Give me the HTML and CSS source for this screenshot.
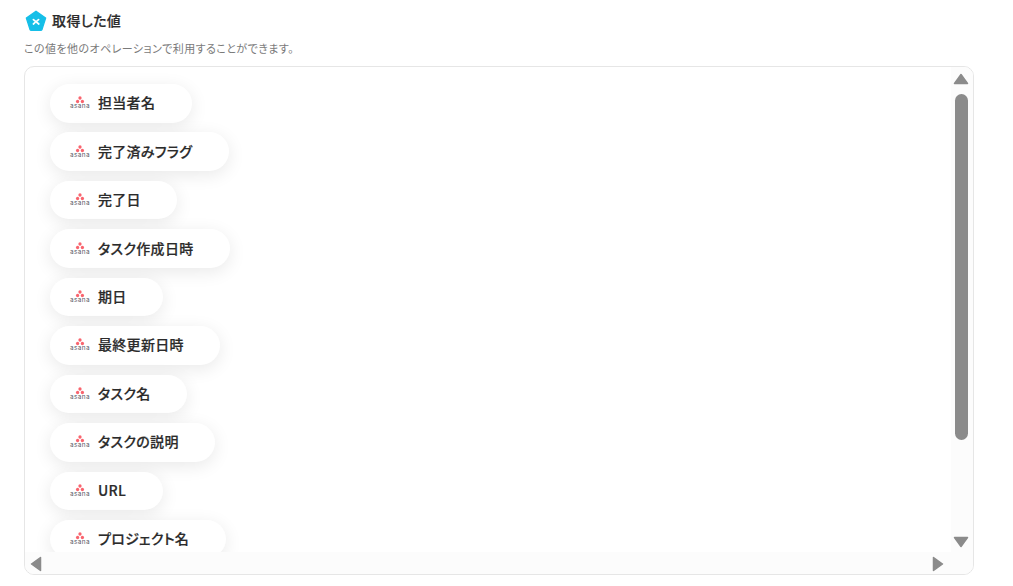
FILE: index.html
```html
<!DOCTYPE html>
<html lang="ja">
<head>
<meta charset="utf-8">
<title>取得した値</title>
<link rel="stylesheet" href="styles.css">
</head>
<body>
<main class="section">
  <h2 class="title">
    <svg class="title-icon" viewBox="0 0 22 22" width="22" height="22" aria-hidden="true">
      <path d="M11 1.2 20.6 8.1 17 19.4a1.5 1.5 0 0 1-1.4 1H6.4a1.5 1.5 0 0 1-1.4-1L1.4 8.1Z" fill="#16bfe8" stroke="#16bfe8" stroke-width="1.4" stroke-linejoin="round"/>
      <path d="M8.4 9.6 13.8 14M13.6 9.6 12 10.9M9.9 12.7 8.4 14" stroke="#fff" stroke-width="1.7" stroke-linecap="round" fill="none"/>
    </svg>
    <span class="title-text">取得した値</span>
  </h2>
  <p class="desc">この値を他のオペレーションで利用することができます。</p>
  <div class="box">
    <div class="viewport">
      <ul class="pills">
        <li class="pill"><svg class="logo" viewBox="0 0 20 13"><circle cx="10" cy="2" r="1.65" fill="#f9646e"/><circle cx="7.6" cy="5.5" r="1.65" fill="#f9646e"/><circle cx="12.4" cy="5.5" r="1.65" fill="#f9646e"/><text x="10" y="12.4" class="logo-text">asana</text></svg><span class="pill-label">担当者名</span></li>
        <li class="pill"><svg class="logo" viewBox="0 0 20 13"><circle cx="10" cy="2" r="1.65" fill="#f9646e"/><circle cx="7.6" cy="5.5" r="1.65" fill="#f9646e"/><circle cx="12.4" cy="5.5" r="1.65" fill="#f9646e"/><text x="10" y="12.4" class="logo-text">asana</text></svg><span class="pill-label">完了済みフラグ</span></li>
        <li class="pill"><svg class="logo" viewBox="0 0 20 13"><circle cx="10" cy="2" r="1.65" fill="#f9646e"/><circle cx="7.6" cy="5.5" r="1.65" fill="#f9646e"/><circle cx="12.4" cy="5.5" r="1.65" fill="#f9646e"/><text x="10" y="12.4" class="logo-text">asana</text></svg><span class="pill-label">完了日</span></li>
        <li class="pill"><svg class="logo" viewBox="0 0 20 13"><circle cx="10" cy="2" r="1.65" fill="#f9646e"/><circle cx="7.6" cy="5.5" r="1.65" fill="#f9646e"/><circle cx="12.4" cy="5.5" r="1.65" fill="#f9646e"/><text x="10" y="12.4" class="logo-text">asana</text></svg><span class="pill-label">タスク作成日時</span></li>
        <li class="pill"><svg class="logo" viewBox="0 0 20 13"><circle cx="10" cy="2" r="1.65" fill="#f9646e"/><circle cx="7.6" cy="5.5" r="1.65" fill="#f9646e"/><circle cx="12.4" cy="5.5" r="1.65" fill="#f9646e"/><text x="10" y="12.4" class="logo-text">asana</text></svg><span class="pill-label">期日</span></li>
        <li class="pill"><svg class="logo" viewBox="0 0 20 13"><circle cx="10" cy="2" r="1.65" fill="#f9646e"/><circle cx="7.6" cy="5.5" r="1.65" fill="#f9646e"/><circle cx="12.4" cy="5.5" r="1.65" fill="#f9646e"/><text x="10" y="12.4" class="logo-text">asana</text></svg><span class="pill-label">最終更新日時</span></li>
        <li class="pill"><svg class="logo" viewBox="0 0 20 13"><circle cx="10" cy="2" r="1.65" fill="#f9646e"/><circle cx="7.6" cy="5.5" r="1.65" fill="#f9646e"/><circle cx="12.4" cy="5.5" r="1.65" fill="#f9646e"/><text x="10" y="12.4" class="logo-text">asana</text></svg><span class="pill-label">タスク名</span></li>
        <li class="pill"><svg class="logo" viewBox="0 0 20 13"><circle cx="10" cy="2" r="1.65" fill="#f9646e"/><circle cx="7.6" cy="5.5" r="1.65" fill="#f9646e"/><circle cx="12.4" cy="5.5" r="1.65" fill="#f9646e"/><text x="10" y="12.4" class="logo-text">asana</text></svg><span class="pill-label">タスクの説明</span></li>
        <li class="pill"><svg class="logo" viewBox="0 0 20 13"><circle cx="10" cy="2" r="1.65" fill="#f9646e"/><circle cx="7.6" cy="5.5" r="1.65" fill="#f9646e"/><circle cx="12.4" cy="5.5" r="1.65" fill="#f9646e"/><text x="10" y="12.4" class="logo-text">asana</text></svg><span class="pill-label">URL</span></li>
        <li class="pill"><svg class="logo" viewBox="0 0 20 13"><circle cx="10" cy="2" r="1.65" fill="#f9646e"/><circle cx="7.6" cy="5.5" r="1.65" fill="#f9646e"/><circle cx="12.4" cy="5.5" r="1.65" fill="#f9646e"/><text x="10" y="12.4" class="logo-text">asana</text></svg><span class="pill-label">プロジェクト名</span></li>
      </ul>
    </div>
    <div class="vbar">
      <svg class="arrow" viewBox="0 0 16 12" width="16" height="12"><path d="M8 1.5 14.5 10.5H1.5Z" fill="#8b8b8b" stroke="#8b8b8b" stroke-width="1.5" stroke-linejoin="round"/></svg>
      <div class="thumb"></div>
      <svg class="arrow arrow-down" viewBox="0 0 16 12" width="16" height="12"><path d="M1.5 1.5H14.5L8 10.5Z" fill="#8b8b8b" stroke="#8b8b8b" stroke-width="1.5" stroke-linejoin="round"/></svg>
    </div>
    <div class="hbar">
      <svg viewBox="0 0 12 16" width="12" height="16"><path d="M10.5 1.5V14.5L1.5 8Z" fill="#8b8b8b" stroke="#8b8b8b" stroke-width="1.5" stroke-linejoin="round"/></svg>
      <svg viewBox="0 0 12 16" width="12" height="16"><path d="M1.5 1.5V14.5L10.5 8Z" fill="#8b8b8b" stroke="#8b8b8b" stroke-width="1.5" stroke-linejoin="round"/></svg>
    </div>
    <div class="corner"></div>
  </div>
</main>
</body>
</html>
```
FILE: styles.css
```css
* { box-sizing: border-box; }
html, body { margin: 0; height: 100%; overflow: hidden; background: #fff; }
body { font-family: "Noto Sans CJK JP", "Noto Sans", sans-serif; color: #2b2b2b; font-feature-settings: "palt"; }
.section { padding: 10px 39px 0 24px; }
.title { display: flex; align-items: center; gap: 5px; margin: 0 0 0 1px; height: 22px; font-size: 14px; line-height: 20px; font-weight: 500; letter-spacing: .4px; -webkit-text-stroke: .2px #2b2b2b; }
.title-text { padding-bottom: 2px; }
.title-icon { flex: none; }
.desc { margin: 9px 0 0; height: 16px; font-size: 11px; line-height: 15px; letter-spacing: .43px; color: #7a7a7a; }
.box { display: grid; grid-template-columns: 1fr 22px; grid-template-rows: 485px 23px; width: 950px; height: 509px; margin-top: 9px; border: 1px solid #e6e6e6; border-radius: 10px; overflow: hidden; background: #fff; }
.viewport { overflow: hidden; padding: 17px 0 0 25px; }
.pills { display: flex; flex-direction: column; align-items: flex-start; gap: 9.94px; margin: 0; padding: 0; list-style: none; }
.pill { display: flex; align-items: center; gap: 8px; height: 38.5px; padding: 0 36.5px 0 20px; border-radius: 20px; background: #fff; box-shadow: 0 4px 18px rgba(0, 0, 0, .09); font-size: 14px; font-weight: 500; line-height: 1; letter-spacing: .3px; white-space: nowrap; -webkit-text-stroke: .2px #2b2b2b; }
.pill-label { padding-bottom: 2px; }
.logo { flex: none; width: 20px; height: 13px; margin-bottom: 1px; overflow: visible; }
.logo-text { font-family: "Inter", sans-serif; font-size: 6.4px; font-weight: 400; letter-spacing: .45px; text-anchor: middle; fill: #55555f; stroke: none; -webkit-text-stroke: 0; }
.vbar { display: flex; flex-direction: column; align-items: center; padding: 6px 3px 0 2px; background: #fcfcfc; }
.arrow { flex: none; margin-right: 2px; }
.thumb { flex: none; width: 13px; height: 346px; margin-top: 9px; border-radius: 7px; background: #8b8b8b; }
.arrow-down { margin-top: 96px; }
.hbar { display: flex; justify-content: space-between; align-items: center; padding: 0 7px 0 5px; background: #fcfcfc; }
.corner { background: #fcfcfc; }
```
